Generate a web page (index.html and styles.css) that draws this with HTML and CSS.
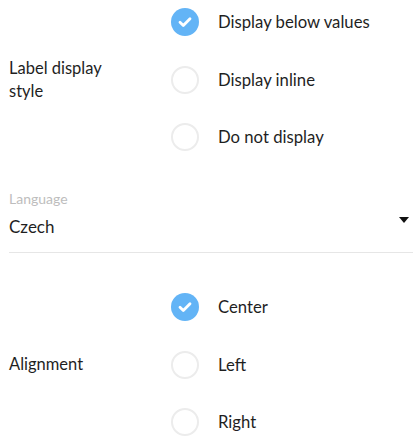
FILE: index.html
```html
<!DOCTYPE html>
<html>
<head>
<meta charset="utf-8">
<link rel="stylesheet" href="styles.css">
</head>
<body>
<div class="page">
  <div class="group first">
    <div class="group-label">Label display<br>style</div>
    <div class="options">
      <div class="option"><span class="radio checked"><svg viewBox="0 0 28 28" width="28" height="28"><path d="M9 14.3l3.3 3.3 6.7-6.9" fill="none" stroke="#fff" stroke-width="2.8" stroke-linecap="round" stroke-linejoin="round"/></svg></span><span class="opt-text">Display below values</span></div>
      <div class="option"><span class="radio"></span><span class="opt-text">Display inline</span></div>
      <div class="option"><span class="radio"></span><span class="opt-text">Do not display</span></div>
    </div>
  </div>
  <div class="field">
    <div class="field-label">Language</div>
    <div class="field-row">
      <span class="field-value">Czech</span>
      <span class="caret"></span>
    </div>
  </div>
  <div class="group second">
    <div class="group-label">Alignment</div>
    <div class="options">
      <div class="option"><span class="radio checked"><svg viewBox="0 0 28 28" width="28" height="28"><path d="M9 14.3l3.3 3.3 6.7-6.9" fill="none" stroke="#fff" stroke-width="2.8" stroke-linecap="round" stroke-linejoin="round"/></svg></span><span class="opt-text">Center</span></div>
      <div class="option"><span class="radio"></span><span class="opt-text">Left</span></div>
      <div class="option"><span class="radio"></span><span class="opt-text">Right</span></div>
    </div>
  </div>
</div>
</body>
</html>
```
FILE: styles.css
```css
html, body {
  margin: 0;
  padding: 0;
  background: #fff;
}
body {
  font-family: "Lato", "Open Sans", sans-serif;
  color: #1f1f1f;
}
.page {
  padding: 0 5px 0 9px;
}
.group {
  display: flex;
  align-items: center;
}
.group.first {
  padding-top: 8px;
  padding-bottom: 8px;
}
.group.second {
  padding-top: 40px;
}
.group-label {
  width: 162px;
  font-size: 16.5px;
  line-height: 23px;
}
.options {
  display: flex;
  flex-direction: column;
  gap: 29.5px;
}
.option {
  display: flex;
  align-items: center;
  height: 28px;
}
.radio {
  width: 28px;
  height: 28px;
  box-sizing: border-box;
  border-radius: 50%;
  border: 2px solid #ececec;
  flex: none;
  display: flex;
}
.radio.checked {
  border: none;
  background: #63b4f6;
}
.opt-text {
  margin-left: 19px;
  font-size: 16.7px;
  line-height: 24px;
}
.field {
  margin-top: 32px;
  padding-bottom: 13px;
  border-bottom: 1px solid #e6e6e6;
}
.field-label {
  font-size: 14px;
  line-height: 16px;
  color: #bdbdbd;
}
.field-row {
  display: flex;
  align-items: flex-start;
  justify-content: space-between;
  margin-top: 8px;
}
.field-value {
  font-size: 17px;
  line-height: 24px;
}
.caret {
  width: 0;
  height: 0;
  border-left: 5.5px solid transparent;
  border-right: 5.5px solid transparent;
  border-top: 6px solid #111;
  margin-top: 2px;
  margin-right: 4px;
}
```
